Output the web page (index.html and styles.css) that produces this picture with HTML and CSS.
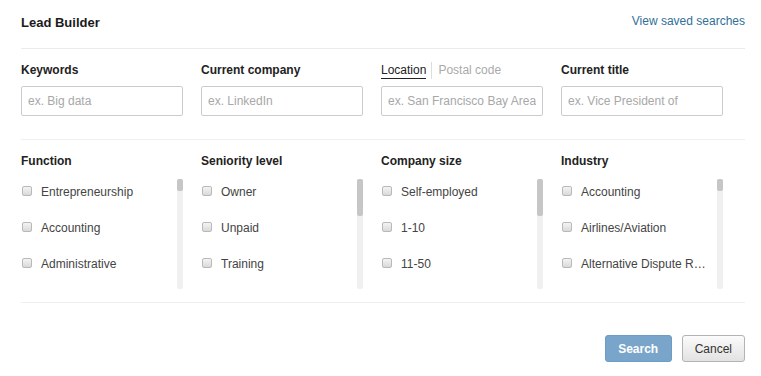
FILE: index.html
```html
<!DOCTYPE html>
<html lang="en">
<head>
	<meta charset="utf-8"/>
	<title>Lead Builder</title>
	<link rel="stylesheet" href="styles.css">
</head>
<body>

<div class="builder">
	<header class="head">
		<h1 class="title">Lead Builder</h1>
		<a class="saved" href="#">View saved searches</a>
	</header>

	<section class="fields">
		<div class="field">
			<div class="label">Keywords</div>
			<input type="text" class="box" placeholder="ex. Big data">
		</div>
		<div class="field">
			<div class="label">Current company</div>
			<input type="text" class="box" placeholder="ex. LinkedIn">
		</div>
		<div class="field">
			<div class="label tabs">
				<span class="tab active">Location</span><span class="sep"></span><span class="tab">Postal code</span>
			</div>
			<input type="text" class="box" placeholder="ex. San Francisco Bay Area">
		</div>
		<div class="field">
			<div class="label">Current title</div>
			<input type="text" class="box" placeholder="ex. Vice President of">
		</div>
	</section>

	<section class="facets">
		<div class="facet">
			<div class="label">Function</div>
			<div class="scroller">
				<ul class="options">
					<li><span class="check"></span>Entrepreneurship</li>
					<li><span class="check"></span>Accounting</li>
					<li><span class="check"></span>Administrative</li>
				</ul>
				<div class="track"><div class="thumb short"></div></div>
			</div>
		</div>
		<div class="facet">
			<div class="label">Seniority level</div>
			<div class="scroller">
				<ul class="options">
					<li><span class="check"></span>Owner</li>
					<li><span class="check"></span>Unpaid</li>
					<li><span class="check"></span>Training</li>
				</ul>
				<div class="track"><div class="thumb long"></div></div>
			</div>
		</div>
		<div class="facet">
			<div class="label">Company size</div>
			<div class="scroller">
				<ul class="options">
					<li><span class="check"></span>Self-employed</li>
					<li><span class="check"></span>1-10</li>
					<li><span class="check"></span>11-50</li>
				</ul>
				<div class="track"><div class="thumb long"></div></div>
			</div>
		</div>
		<div class="facet">
			<div class="label">Industry</div>
			<div class="scroller">
				<ul class="options">
					<li><span class="check"></span>Accounting</li>
					<li><span class="check"></span>Airlines/Aviation</li>
					<li><span class="check"></span>Alternative Dispute R…</li>
				</ul>
				<div class="track"><div class="thumb short"></div></div>
			</div>
		</div>
	</section>

	<footer class="actions">
		<button type="button" class="btn primary">Search</button>
		<button type="button" class="btn">Cancel</button>
	</footer>
</div>

</body>
</html>
```

FILE: styles.css
```css
body {
	margin: 0;
	background: #fff;
	color: #333;
	font-family: "Liberation Sans", Arial, sans-serif;
	font-size: 12px;
}
.builder {
	width: 724px;
	margin-left: 21px;
}
.head {
	display: flex;
	justify-content: space-between;
	align-items: center;
	height: 48px;
	border-bottom: 1px solid #e9ebec;
}
.title {
	margin: 0;
	font-size: 13px;
	font-weight: bold;
	color: #1a1a1a;
	padding-bottom: 4px;
}
.saved {
	color: #2f6f98;
	text-decoration: none;
	font-size: 12px;
	padding-bottom: 6px;
}
.fields {
	display: flex;
	padding: 14px 0 23px;
	border-bottom: 1px solid #eeeff0;
}
.field, .facet {
	width: 180px;
}
.label {
	font-weight: bold;
	line-height: 14px;
	height: 14px;
	color: #222;
}
.tabs {
	display: flex;
	align-items: flex-start;
}
.tab {
	font-weight: normal;
	color: #aaa;
}
.tab.active {
	color: #222;
	border-bottom: 1px solid #222;
	padding-bottom: 1px;
}
.sep {
	width: 1px;
	height: 17px;
	margin: -1px 6px 0 5px;
	background: #ddd;
}
.box {
	display: block;
	box-sizing: border-box;
	margin-top: 9px;
	width: 162px;
	height: 30px;
	padding: 0 6px;
	border: 1px solid #ccc;
	border-radius: 2px;
	font-family: inherit;
	font-size: 12px;
	color: #333;
}
.box::placeholder {
	color: #a8a8a8;
}
.facets {
	display: flex;
	padding: 14px 0 13px;
	border-bottom: 1px solid #eeeff0;
}
.scroller {
	display: flex;
	width: 162px;
	height: 110px;
	margin-top: 11px;
}
.options {
	flex: 1;
	list-style: none;
	margin: 0;
	padding: 6px 0 0 1px;
	min-width: 0;
}
.options li {
	display: flex;
	align-items: center;
	line-height: 14px;
	margin-bottom: 22px;
	color: #444;
	white-space: nowrap;
}
.check {
	flex: none;
	box-sizing: border-box;
	width: 10px;
	height: 10px;
	margin: -3px 9px 0 0;
	border: 1px solid #b9b9b9;
	border-radius: 2px;
	background: linear-gradient(#f4f4f4, #d9d9d9);
}
.track {
	flex: none;
	width: 6px;
	margin-left: 6px;
	background: #f0f0f0;
	border-radius: 2px;
}
.thumb {
	background: #c6c6c6;
	border-radius: 2px;
}
.thumb.short {
	height: 12px;
}
.thumb.long {
	height: 37px;
}
.actions {
	display: flex;
	justify-content: flex-end;
	gap: 10px;
	padding-top: 32px;
}
.btn {
	height: 27px;
	padding: 0 12px;
	border: 1px solid #b3b3b3;
	border-radius: 3px;
	background: linear-gradient(#fbfbfb, #e2e2e2);
	font-family: inherit;
	font-size: 12px;
	color: #333;
}
.btn.primary {
	width: 67px;
	border-color: #6f9cc4;
	background: #7aa5ca;
	color: #fff;
	font-weight: bold;
}
```
